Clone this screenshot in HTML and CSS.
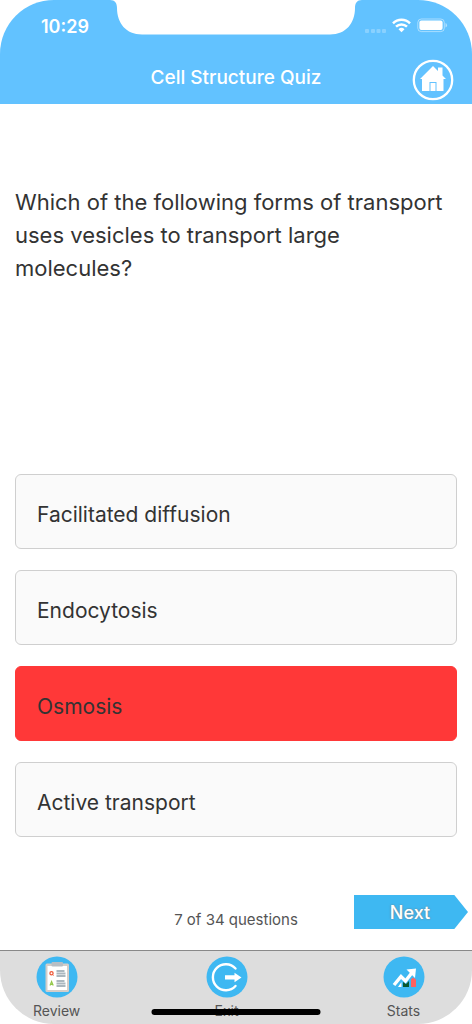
FILE: index.html
```html
<!DOCTYPE html>
<html lang="en">
<head>
<meta charset="utf-8">
<meta name="viewport" content="width=device-width, initial-scale=1">
<title>Cell Structure Quiz</title>
<link rel="stylesheet" href="styles.css">
</head>
<body>
<div class="screen">
  <header class="header">
    <svg class="notch" viewBox="0 0 252 35" aria-hidden="true"><path fill="#fff" d="M0 0C5 0 7 3 7 8C7 23 16 34.500 32 34.500H220C236 34.500 245 23 245 8C245 3 247 0 252 0Z"/></svg>
    <div class="status">
      <span class="time">10:29</span>
      <svg class="indicators" viewBox="0 0 84 18" aria-hidden="true">
        <g fill="#fff" opacity=".25"><rect x="1" y="12" width="4" height="4" rx="1"/><rect x="7" y="12" width="4" height="4" rx="1"/><rect x="12.500" y="12" width="4" height="4" rx="1"/><rect x="18" y="12" width="4" height="4" rx="1"/></g>
        <g fill="none" stroke="#fff" stroke-width="2.500"><path d="M29 6.300a12 12 0 0 1 17 0M32 9.600a8 8 0 0 1 11 0"/></g>
        <path fill="#fff" d="M34.500 12.200a4.500 4.500 0 0 1 6 0l-3 3z"/>
        <rect x="53.800" y="2" width="26.500" height="12.600" rx="3.500" fill="none" stroke="#fff" stroke-opacity=".45"/>
        <rect x="55.400" y="3.600" width="23.200" height="9.400" rx="2" fill="#fff"/>
        <path fill="#fff" opacity=".5" d="M81.500 6q1.500 .5 1.500 2.300t-1.500 2.300z"/>
      </svg>
    </div>
    <div class="titlebar">
      <h1 class="title">Cell Structure Quiz</h1>
      <button class="home" type="button" aria-label="Home">
        <svg viewBox="0 0 42 42" aria-hidden="true"><circle cx="21" cy="21" r="19.200" fill="none" stroke="#fff" stroke-width="2.300"/><path fill="#fff" fill-rule="evenodd" d="M21 7l5 5V8.500h4.500V16.500L34 20H31.500V32H10V20H8zM17.500 23V32H18.500V24H23.500V32H24.500V23z"/></svg>
      </button>
    </div>
  </header>
  <main class="quiz">
    <h2 class="question">Which of the following forms of transport uses vesicles to transport large molecules?</h2>
    <div class="answers">
      <button class="answer" type="button">Facilitated diffusion</button>
      <button class="answer" type="button">Endocytosis</button>
      <button class="answer wrong" type="button">Osmosis</button>
      <button class="answer" type="button">Active transport</button>
    </div>
    <div class="progress">
      <span class="count">7 of 34 questions</span>
      <button class="next" type="button">Next</button>
    </div>
  </main>
  <nav class="tabs">
    <button class="tab" type="button">
      <svg viewBox="0 0 42 42" aria-hidden="true"><circle cx="21" cy="21" r="20.500" fill="#3eb8f2"/><rect x="9.500" y="7.500" width="23.500" height="28.500" rx="1.500" fill="#d4cdc8"/><rect x="11.500" y="10" width="19.500" height="24" fill="#fff"/><rect x="15.500" y="6" width="11.500" height="4.500" rx="1" fill="#b7bec4"/><circle cx="15.500" cy="17.200" r="1.600" fill="none" stroke="#ee5838" stroke-width="1.300"/><path d="M16 18l1.500 1.500" stroke="#ee5838"/><path d="M14 29.500l1.600-4 1.600 4M14.500 28.300h2.300" fill="none" stroke="#93c84a" stroke-width="1.200"/><path d="M20.500 15h8M20.500 17.500h9M20.500 20h9M20.500 25h8M20.500 27.500h9M20.500 30h9" stroke="#abb7bf" stroke-width="2"/></svg>
      <span>Review</span>
    </button>
    <button class="tab" type="button">
      <svg viewBox="0 0 42 42" aria-hidden="true"><circle cx="21" cy="21" r="20.500" fill="#3eb8f2"/><path d="M29.500 12.500A13 13 0 1 0 29.500 30" fill="none" stroke="#fff" stroke-width="2.400" stroke-linecap="round"/><path fill="#fff" d="M19 19.300h9.500V16.800l7 4.700-7 4.700V23.500H19z"/></svg>
      <span>Exit</span>
    </button>
    <button class="tab" type="button">
      <svg viewBox="0 0 42 42" aria-hidden="true"><circle cx="21" cy="21" r="20.500" fill="#3eb8f2"/><path fill="#fff" d="M15 31l3.500-5v5z"/><path fill="#07572e" d="M20 26l3 2 3-3v6h-6z"/><path fill="#ff6260" d="M28 23.500l2-2 3 2V31h-5z"/><path fill="none" stroke="#fff" stroke-width="3.400" d="M11 29l7-8.500 4.500 4.500 7-9"/><path fill="#fff" d="M23.500 13.500l9.500-1-1 9.500z"/></svg>
      <span>Stats</span>
    </button>
  </nav>
  <div class="home-indicator"></div>
</div>
</body>
</html>
```
FILE: styles.css
```css
* { box-sizing: border-box; }
body { margin: 0; background: #fff; font-family: Inter, "Liberation Sans", sans-serif; color: #333; }
button { border: 0; padding: 0; margin: 0; background: none; font: inherit; color: inherit; }
svg { display: block; }

.screen { position: relative; display: flex; flex-direction: column; min-height: 100vh; background: #fff; border-radius: 54px; overflow: hidden; }

.header { position: relative; background: #62c2ff; color: #fff; }
.notch { position: absolute; top: 0; left: 50%; width: 252px; transform: translateX(-50%); }
.status { display: flex; justify-content: space-between; align-items: center; height: 52px; padding: 0 24px 0 41px; }
.time { font-size: 18px; font-weight: 600; }
.indicators { width: 84px; height: 18px; }
.titlebar { display: grid; grid-template-columns: 1fr auto 1fr; align-items: center; height: 52px; padding: 0 18px; }
.title { grid-column: 2; margin: 0; font-size: 19px; line-height: 24px; font-weight: 500; }
.home { justify-self: end; width: 42px; height: 42px; margin-top: 4px; }

.quiz { flex: 1; display: flex; flex-direction: column; padding: 82px 15px 20px; }
.question { margin: 0; font-size: 22px; line-height: 33px; font-weight: 400; }
.answers { display: flex; flex-direction: column; gap: 21px; margin-top: auto; padding-top: 24px; }
.answer { height: 75px; padding: 6px 21px 0; border: 1px solid #cfcfcf; border-radius: 6px; background: #fafafa; font-size: 21px; text-align: left; }
.wrong { border-color: #ff3838; background: #ff3838; }
.progress { display: grid; grid-template-columns: 1fr auto 1fr; align-items: center; margin: 57px -11px 0; }
.count { grid-column: 2; padding-top: 16px; font-size: 15px; line-height: 20px; color: #555; }
.next { justify-self: end; width: 114px; height: 34px; padding-right: 2px; background: #3eb8f2; clip-path: polygon(0 0, 88% 0, 100% 50%, 88% 100%, 0 100%); color: #fff; font-size: 18px; font-weight: 500; text-shadow: 0 0 2px #777; }

.tabs { display: grid; grid-template-columns: 24% 48% 27%; height: 74px; padding-top: 5px; border-top: 1px solid #888; background: #ddd; }
.tab { display: flex; flex-direction: column; align-items: center; gap: 3px; font-size: 14px; line-height: 20px; color: #555; }
.tab svg { width: 42px; height: 42px; }
.home-indicator { position: absolute; bottom: 9px; left: 50%; width: 169px; height: 6px; border-radius: 3px; background: #000; transform: translateX(-50%); }
```
